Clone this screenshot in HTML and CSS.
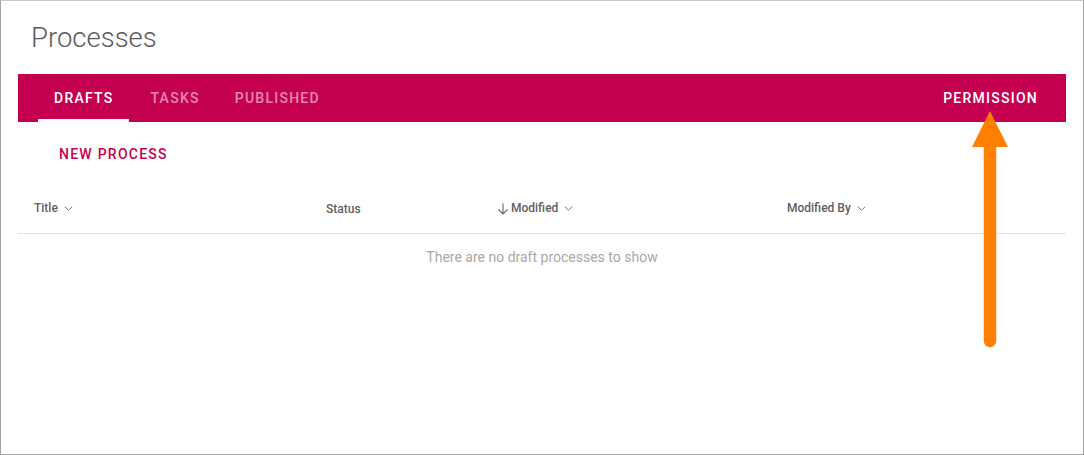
FILE: index.html
```html
<!DOCTYPE html>
<html>
<head>
<meta charset="utf-8">
<link rel="stylesheet" href="styles.css">
</head>
<body>
<div class="frame">
  <h1 class="page-title">Processes</h1>
  <nav class="tabbar">
    <div class="tabs">
      <div class="tab active">DRAFTS</div>
      <div class="tab">TASKS</div>
      <div class="tab">PUBLISHED</div>
    </div>
    <div class="tab perm">PERMISSION</div>
  </nav>
  <div class="actions">
    <button class="btn-new">NEW PROCESS</button>
  </div>
  <div class="table-head">
    <div class="col c1">Title <svg class="chev" width="9" height="5" viewBox="0 0 9 5"><path d="M0.8 0.8l3.7 3.4 3.7-3.4" fill="none" stroke="#777" stroke-width="1"/></svg></div>
    <div class="col c2">Status</div>
    <div class="col c3"><svg class="arrow-down" width="12" height="12" viewBox="0 0 12 12"><path d="M6 0.5v10.5M1.5 6.5L6 11l4.5-4.5" fill="none" stroke="#666" stroke-width="1.1"/></svg>Modified <svg class="chev" width="9" height="5" viewBox="0 0 9 5"><path d="M0.8 0.8l3.7 3.4 3.7-3.4" fill="none" stroke="#777" stroke-width="1"/></svg></div>
    <div class="col c4">Modified By <svg class="chev" width="9" height="5" viewBox="0 0 9 5"><path d="M0.8 0.8l3.7 3.4 3.7-3.4" fill="none" stroke="#777" stroke-width="1"/></svg></div>
  </div>
  <div class="empty">There are no draft processes to show</div>
  <svg class="callout" width="40" height="240" viewBox="0 0 40 240">
    <path d="M18 35V230" stroke="#ff7f00" stroke-width="12.5" stroke-linecap="round" fill="none"/>
    <path d="M18 0L36 36H0Z" fill="#ff7f00"/>
  </svg>
</div>
</body>
</html>
```
FILE: styles.css
```css
* { box-sizing: border-box; }
html, body { margin: 0; padding: 0; background: #fff; }
body { font-family: Roboto, "Liberation Sans", sans-serif; }
.frame {
  position: relative;
  width: 1084px;
  height: 455px;
  border: 1px solid #a3a3a3;
  border-top-color: #c8c8c8;
  padding: 0 17px;
  overflow: hidden;
}
.page-title {
  margin: 0;
  padding: 20px 0 0 13px;
  height: 73px;
  font-family: "Roboto Light", Roboto, sans-serif;
  font-weight: 300;
  font-size: 27.5px;
  line-height: 34px;
  color: #5a5a5a;
}
.tabbar {
  height: 48px;
  background: #c50050;
  display: flex;
  justify-content: space-between;
  align-items: stretch;
  padding: 0 13px 0 20px;
}
.tabs { display: flex; gap: 5px; }
.tab {
  position: relative;
  padding: 0 16px;
  display: flex;
  align-items: center;
  font-size: 14px;
  font-weight: 500;
  letter-spacing: 1.25px;
  color: rgba(255,255,255,0.55);
}
.tabs .tab:nth-child(3) { margin-left: -2px; }
.tab.active { color: #fff; }
.tab.active::after {
  content: "";
  position: absolute;
  left: 0; right: 0; bottom: 0;
  height: 3px;
  background: #fff;
}
.tab.perm { color: #fff; padding-right: 15px; }
.actions { height: 64px; padding: 14px 0 0 25px; }
.btn-new {
  border: 0;
  background: none;
  height: 36px;
  padding: 0 16px;
  font-family: inherit;
  font-size: 14px;
  font-weight: 500;
  letter-spacing: 1.25px;
  color: #c50050;
}
.table-head {
  display: grid;
  grid-template-columns: 292px 171px 290px 1fr;
  height: 48px;
  align-items: center;
  border-bottom: 1px solid #e0e0e0;
  padding-bottom: 4px;
}
.col {
  padding-left: 16px;
  font-size: 12px;
  font-weight: 500;
  color: #5f5f5f;
  display: flex;
  align-items: center;
  white-space: pre;
}
.c2 { padding-top: 2px; }
.chev { margin-left: 3px; margin-top: 2px; }
.arrow-down { margin-right: 2px; margin-top: 2px; }
.empty {
  text-align: center;
  font-size: 14px;
  color: #a8a8a8;
  padding-top: 15px;
}
.callout {
  position: absolute;
  left: 971px;
  top: 110px;
}
```
